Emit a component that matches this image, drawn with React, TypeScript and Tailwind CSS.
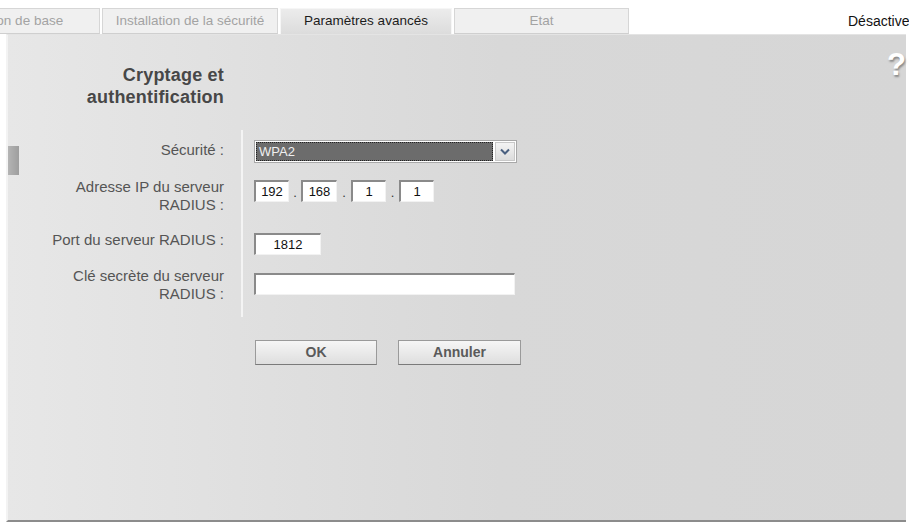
import React from "react";

const font = { fontFamily: '"Liberation Sans", Arial, sans-serif' };

function Tab({ label, width, active, first }: { label: string; width: string; active?: boolean; first?: boolean }) {
  return (
    <div
      className={
        "h-[26px] shrink-0 flex items-center justify-center text-[13.5px] whitespace-nowrap border-t border-l border-r " +
        width +
        " " +
        (first ? "ml-[-90px] " : "ml-[2px] ") +
        (active
          ? "bg-gradient-to-b from-[#ececec] to-[#dcdcdc] border-[#f6f6f6] text-[#1c1c1c]"
          : "bg-[#f0f0f0] border-[#d6d6d6] text-[#a3a3a3] border-b border-b-[#cfcfcf]")
      }
    >
      {label}
    </div>
  );
}

function IpBox({ value, w }: { value: string; w: string }) {
  return (
    <div
      className={
        "h-[22px] bg-white border-t-2 border-l-2 border-r border-b border-t-[#8a8a8a] border-l-[#8a8a8a] border-r-[#f2f2f2] border-b-[#f2f2f2] flex items-center justify-center text-[13px] text-[#111] " +
        w
      }
    >
      {value}
    </div>
  );
}

export default function App() {
  return (
    <div className="w-[909px] h-[526px] bg-white overflow-hidden relative" style={font}>
      {/* Tabs row */}
      <div className="flex items-end pt-[8px] h-[34px]">
        <Tab label="Installation de base" width="w-[190px]" first />
        <Tab label="Installation de la sécurité" width="w-[176px]" />
        <Tab label="Paramètres avancés" width="w-[172px]" active />
        <Tab label="Etat" width="w-[175px]" />
        <div className="ml-[219px] self-center text-[14px] text-[#111] whitespace-nowrap pt-[1px]">Désactiver</div>
      </div>

      {/* Panel */}
      <div className="relative ml-[6px] w-[900px] h-[488px] border-l-2 border-[#f3f3f3] border-b-2 border-b-[#8c8c8c] border-t border-t-[#e4e4e4] bg-gradient-to-r from-[#e7e7e7] via-[#d8d8d8] via-55% to-[#d6d6d6]">
        <div className="absolute left-0 top-[111px] w-[11px] h-[29px] bg-gradient-to-r from-[#b4b4b4] to-[#9e9e9e]" />
        <div
          className="absolute right-[0px] top-[14px] text-[31px] leading-none text-white font-bold"
          style={{ textShadow: "1px 2px 2px #8a8a8a" }}
        >
          ?
        </div>

        {/* Heading */}
        <div className="w-[216px] pt-[29px] text-right text-[18px] leading-[22px] font-bold text-[#474747] tracking-[0.2px]">
          <div>Cryptage et</div>
          <div>authentification</div>
        </div>

        {/* Form */}
        <div className="flex mt-[22px]">
          <div className="w-[216px] text-right text-[15px] leading-[18px] text-[#555] pt-[11px]">
            <div>Sécurité :</div>
            <div className="mt-[19px]">
              Adresse IP du serveur
              <br />
              RADIUS :
            </div>
            <div className="mt-[17px]">Port du serveur RADIUS :</div>
            <div className="mt-[18px]">
              Clé secrète du serveur
              <br />
              RADIUS :
            </div>
          </div>

          <div className="ml-[17px] w-[2px] bg-[#f4f4f4]" />

          <div className="pl-[11px] pt-[10px] pb-[22px]">
            {/* Select */}
            <div className="w-[263px] h-[23px] border border-[#a8a8a8] bg-white flex items-center p-[1px]">
              <div className="flex-1 h-full bg-[#6c6c6c] border border-dotted border-[#222] flex items-center pl-[2px] text-[13px] text-[#efefef]">
                WPA2
              </div>
              <div className="w-[20px] h-full ml-[2px] bg-gradient-to-b from-[#f4f4f4] to-[#dcdcdc] border border-[#c8c8c8] flex items-center justify-center">
                <svg width="10" height="7" viewBox="0 0 10 7">
                  <path d="M1 1.5 L5 5.5 L9 1.5" stroke="#4a6080" strokeWidth="2" fill="none" />
                </svg>
              </div>
            </div>

            {/* IP */}
            <div className="flex items-end mt-[17px] text-[13px] text-[#333]">
              <IpBox value="192" w="w-[35px]" />
              <span className="w-[12px] text-center leading-none pb-[3px]">.</span>
              <IpBox value="168" w="w-[36px]" />
              <span className="w-[14px] text-center leading-none pb-[3px]">.</span>
              <IpBox value="1" w="w-[35px]" />
              <span className="w-[13px] text-center leading-none pb-[3px]">.</span>
              <IpBox value="1" w="w-[35px]" />
            </div>

            {/* Port */}
            <div className="mt-[31px]">
              <IpBox value="1812" w="w-[67px]" />
            </div>

            {/* Secret */}
            <div className="mt-[18px]">
              <IpBox value="" w="w-[261px]" />
            </div>
          </div>
        </div>

        {/* Buttons */}
        <div className="flex ml-[247px] mt-[23px] gap-[21px]">
          <button className="w-[122px] h-[25px] border border-[#9a9a9a] border-b-[#7a7a7a] bg-gradient-to-b from-[#f6f6f6] to-[#dedede] text-[14px] font-bold text-[#5a5a5a]">
            OK
          </button>
          <button className="w-[123px] h-[25px] border border-[#9a9a9a] border-b-[#7a7a7a] bg-gradient-to-b from-[#f6f6f6] to-[#dedede] text-[14px] font-bold text-[#5a5a5a]">
            Annuler
          </button>
        </div>
      </div>
    </div>
  );
}
